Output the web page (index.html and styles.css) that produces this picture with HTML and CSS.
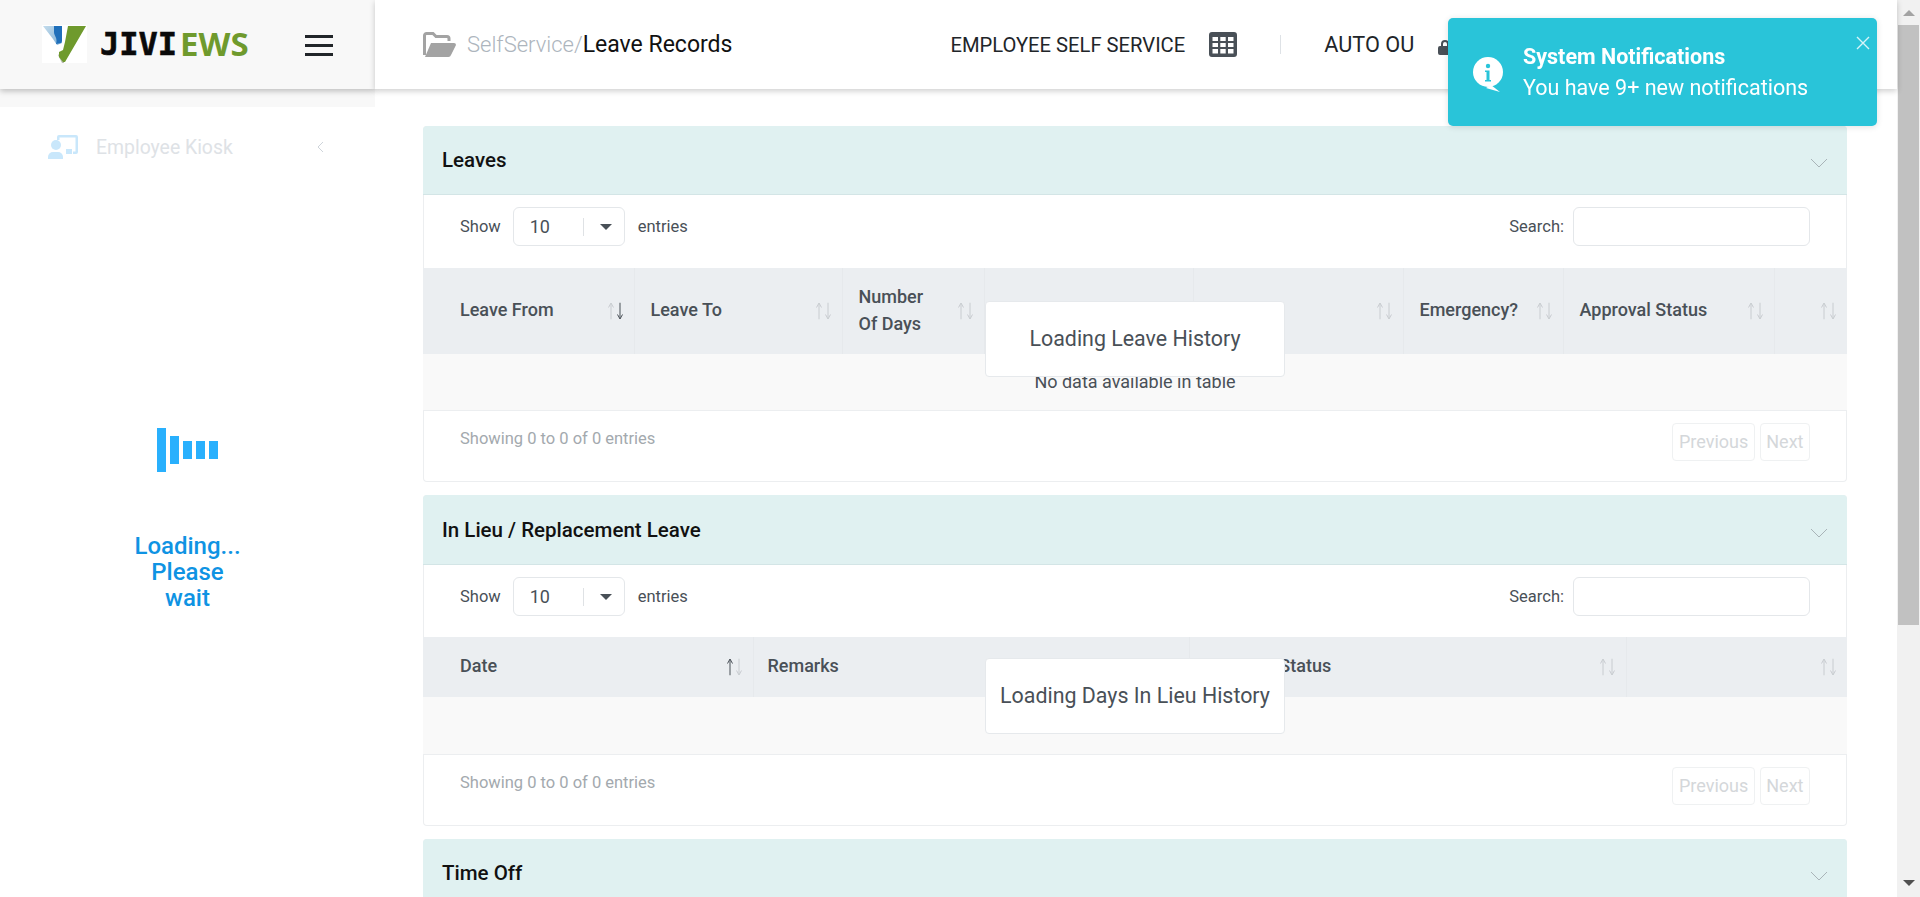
FILE: index.html
```html
<!doctype html>
<html lang="en">
<head>
    <meta charset="UTF-8">
    <title>Leave Records</title>
    <link rel="stylesheet" href="styles.css">
</head>
<body>
<svg class="sprites">
    <symbol id="arrows" viewBox="0 0 17 17">
        <path class="sort__up" d="M4 17V1M1.500 5 4 .5 6.500 5"/>
        <path class="sort__down" d="M13 0v16M10.500 12 13 16.500 15.500 12"/>
    </symbol>
</svg>
<div class="app">
    <aside class="sidebar">
        <div class="sidebar__head">
            <a class="logo" href="#">
                <svg class="logo__mark" viewBox="0 0 45 38">
                    <defs>
                        <linearGradient id="wedge" x1="0" y1="0" x2="1" y2="1">
                            <stop offset="0" stop-color="#c4dcec"/>
                            <stop offset="1" stop-color="#7fb0d6"/>
                        </linearGradient>
                    </defs>
                    <rect width="45" height="38" fill="#fff"/>
                    <polygon points="1,1 20,1 20,18 15,20 11,14" fill="url(#wedge)"/>
                    <path d="M12 1h8v15l-1 2-5 1c2-6-2-8-2-12z" fill="#1f6fba"/>
                    <polygon points="16,30 21,26 22,38 20,38" fill="#b8bcb0"/>
                    <polygon points="44,1 26,1 23,17 21,25 17,27 17,32 21,37 23,37" fill="#6f9a2d"/>
                </svg>
                <span class="logo__text">JIVI</span><span class="logo__accent">EWS</span>
            </a>
            <button class="burger" type="button"><span></span><span></span><span></span></button>
        </div>
        <div class="sidebar__strip"></div>
        <nav class="sidebar__nav">
            <svg class="sidebar__icon" viewBox="0 0 30 24">
                <path d="M11 0h17a2 2 0 0 1 2 2v15a2 2 0 0 1-2 2H25v-2.500h2.500v-14H11.500V5H9V2a2 2 0 0 1 2-2z" fill="#c9e7fb"/>
                <circle cx="8" cy="10" r="5" fill="#c9e7fb"/>
                <path d="M0 24v-2a5 5 0 0 1 5-5h5a5 5 0 0 1 5 5v2z" fill="#c9e7fb"/>
                <rect x="18" y="14" width="6" height="5" fill="#c9e7fb"/>
            </svg>
            <span class="sidebar__label">Employee Kiosk</span>
            <svg class="sidebar__caret" viewBox="0 0 8 12"><path d="M7 1 2 6l5 5" fill="none" stroke="#ced4da"/></svg>
        </nav>
        <div class="loader">
            <div class="loader__bars">
                <span class="loader__bar loader__bar--tall"></span>
                <span class="loader__bar loader__bar--mid"></span>
                <span class="loader__bar"></span>
                <span class="loader__bar"></span>
                <span class="loader__bar"></span>
            </div>
            <p class="loader__text">Loading...<br>Please<br>wait</p>
        </div>
    </aside>

    <div class="main">
        <header class="topbar">
            <svg class="topbar__folder" viewBox="0 0 33 25">
                <path d="M1.500 23V3.500a2 2 0 0 1 2-2h6.500l3 3h11a2 2 0 0 1 2 2V9" fill="none" stroke="#a3a3a3" stroke-width="3"/>
                <path d="M8 11h23a2 2 0 0 1 2 2l-5 10a3 3 0 0 1-3 2H2z" fill="#a3a3a3"/>
            </svg>
            <div class="crumbs"><span class="crumbs__muted">SelfService/</span>Leave Records</div>
            <div class="topbar__right">
                <span class="topbar__item">EMPLOYEE SELF SERVICE</span>
                <svg class="topbar__grid" viewBox="0 0 28 25">
                    <path fill-rule="evenodd" fill="#495057" d="M3 0h22a3 3 0 0 1 3 3v19a3 3 0 0 1-3 3H3a3 3 0 0 1-3-3V3a3 3 0 0 1 3-3zM3.500 5v4h5.500V5zm7.800 0v4h5.400V5zm7.700 0v4h5.500V5zM3.500 11v4h5.500v-4zm7.800 0v4h5.400v-4zm7.700 0v4h5.500v-4zM3.500 17v4.500h5.500V17zm7.800 0v4.500h5.400V17zm7.700 0v4.500h5.500V17z"/>
                </svg>
                <span class="topbar__sep"></span>
                <span class="topbar__item topbar__item--ou">AUTO OU</span>
                <svg class="topbar__lock" viewBox="0 0 14 16">
                    <path d="M3 7V5a4 4 0 0 1 8 0v2h1a2 2 0 0 1 2 2v5a2 2 0 0 1-2 2H2a2 2 0 0 1-2-2V9a2 2 0 0 1 2-2zm2 0h4V5a2 2 0 0 0-4 0z" fill="#495057"/>
                </svg>
            </div>
        </header>

        <main class="content">
            <section class="card">
                <div class="card__head">
                    <h2 class="card__title">Leaves</h2>
                    <svg class="card__chevron" viewBox="0 0 18 10"><path d="M1 1l8 8 8-8" fill="none" stroke="#a9b4b8"/></svg>
                </div>
                <div class="card__body">
                    <div class="controls controls--tall">
                        <div class="controls__length">
                            <span>Show</span>
                            <div class="picker"><span class="picker__value">10</span><span class="picker__arrow"></span></div>
                            <span>entries</span>
                        </div>
                        <div class="controls__search">
                            <label for="search-leaves">Search:</label>
                            <input class="controls__input" id="search-leaves" type="text">
                        </div>
                    </div>
                    <table class="grid grid--leaves">
                        <colgroup>
                            <col class="c-211"><col class="c-208"><col class="c-142"><col class="c-209"><col class="c-210"><col class="c-160"><col class="c-211"><col class="c-73">
                        </colgroup>
                        <thead>
                        <tr>
                            <th class="grid__first">Leave From<svg class="sort sort--desc"><use href="#arrows"/></svg></th>
                            <th>Leave To<svg class="sort"><use href="#arrows"/></svg></th>
                            <th>Number<br>Of Days<svg class="sort"><use href="#arrows"/></svg></th>
                            <th><svg class="sort"><use href="#arrows"/></svg></th>
                            <th><svg class="sort"><use href="#arrows"/></svg></th>
                            <th>Emergency?<svg class="sort"><use href="#arrows"/></svg></th>
                            <th>Approval Status<svg class="sort"><use href="#arrows"/></svg></th>
                            <th><svg class="sort"><use href="#arrows"/></svg></th>
                        </tr>
                        </thead>
                        <tbody>
                        <tr><td class="grid__empty" colspan="8">No data available in table</td></tr>
                        </tbody>
                    </table>
                    <div class="pager">
                        <span class="pager__info">Showing 0 to 0 of 0 entries</span>
                        <div class="pager__btns"><a class="pager__btn" href="#">Previous</a><a class="pager__btn" href="#">Next</a></div>
                    </div>
                    <div class="processing">Loading Leave History</div>
                </div>
            </section>

            <section class="card">
                <div class="card__head card__head--tall">
                    <h2 class="card__title">In Lieu / Replacement Leave</h2>
                    <svg class="card__chevron" viewBox="0 0 18 10"><path d="M1 1l8 8 8-8" fill="none" stroke="#a9b4b8"/></svg>
                </div>
                <div class="card__body card__body--short">
                    <div class="controls">
                        <div class="controls__length">
                            <span>Show</span>
                            <div class="picker"><span class="picker__value">10</span><span class="picker__arrow"></span></div>
                            <span>entries</span>
                        </div>
                        <div class="controls__search">
                            <label for="search-lieu">Search:</label>
                            <input class="controls__input" id="search-lieu" type="text">
                        </div>
                    </div>
                    <table class="grid grid--lieu">
                        <colgroup>
                            <col class="c-330"><col class="c-436"><col class="c-437"><col class="c-221">
                        </colgroup>
                        <thead>
                        <tr>
                            <th class="grid__first">Date<svg class="sort sort--asc"><use href="#arrows"/></svg></th>
                            <th>Remarks</th>
                            <th>Approval Status<svg class="sort"><use href="#arrows"/></svg></th>
                            <th><svg class="sort"><use href="#arrows"/></svg></th>
                        </tr>
                        </thead>
                        <tbody>
                        <tr><td class="grid__empty" colspan="4"></td></tr>
                        </tbody>
                    </table>
                    <div class="pager">
                        <span class="pager__info">Showing 0 to 0 of 0 entries</span>
                        <div class="pager__btns"><a class="pager__btn" href="#">Previous</a><a class="pager__btn" href="#">Next</a></div>
                    </div>
                    <div class="processing">Loading Days In Lieu History</div>
                </div>
            </section>

            <section class="card">
                <div class="card__head">
                    <h2 class="card__title">Time Off</h2>
                    <svg class="card__chevron" viewBox="0 0 18 10"><path d="M1 1l8 8 8-8" fill="none" stroke="#a9b4b8"/></svg>
                </div>
            </section>
        </main>
    </div>

    <div class="scrollbar">
        <span class="scrollbar__up"></span>
        <span class="scrollbar__thumb"></span>
        <span class="scrollbar__down"></span>
    </div>
</div>

<div class="toast">
    <svg class="toast__icon" viewBox="0 0 30 36">
        <circle cx="15" cy="15" r="15" fill="#fff"/>
        <path d="M18 28l9 7-14-4z" fill="#fff"/>
        <circle cx="15" cy="9" r="2.200" fill="#29c4d9"/>
        <path d="M12 13.500h4.500V23H18v1.500h-6V23h1.500v-8H12z" fill="#29c4d9"/>
    </svg>
    <div class="toast__body">
        <div class="toast__title">System Notifications</div>
        <div class="toast__msg">You have 9+ new notifications</div>
    </div>
    <svg class="toast__close" viewBox="0 0 14 14"><path d="M1 1l12 12M13 1 1 13" stroke="#d8f4f8" stroke-width="1.400"/></svg>
</div>
</body>
</html>
```

FILE: styles.css
```css
* {
    box-sizing: border-box;
}

html,
body {
    height: 100%;
}

body {
    margin: 0;
    overflow: hidden;
    background: #fff;
    color: #495057;
    font-family: Roboto, "Liberation Sans", sans-serif;
    font-size: 16.500px;
}

.sprites {
    display: none;
}

.app {
    display: flex;
    height: 897px;
    overflow: hidden;
}

/* sidebar */

.sidebar {
    width: 375px;
    flex: none;
    background: #fff;
}

.sidebar__head {
    height: 89px;
    padding: 25px 42px 0;
    display: flex;
    align-items: flex-start;
    justify-content: space-between;
    background: #f8f8f8;
    box-shadow: 0 2px 6px rgba(0, 0, 0, 0.25);
    position: relative;
}

.sidebar__strip {
    height: 18px;
    background: #f8f8f8;
}

.logo {
    display: flex;
    align-items: center;
    height: 38px;
    text-decoration: none;
    line-height: 38px;
}

.logo__mark {
    width: 45px;
    height: 38px;
    margin-right: 13px;
}

.logo__text {
    font-family: "DejaVu Sans Mono", monospace;
    font-weight: 700;
    font-size: 32px;
    color: #0a0a0a;
    -webkit-text-stroke: 0.6px #0a0a0a;
}

.logo__accent {
    margin-left: 3px;
    font-family: "Open Sans", sans-serif;
    font-weight: 700;
    font-size: 33px;
    color: #6f9a2d;
}

.burger {
    width: 28px;
    margin: 10px 0 0;
    padding: 0;
    border: 0;
    background: none;
    display: flex;
    flex-direction: column;
    gap: 6px;
}

.burger span {
    height: 3px;
    background: #212529;
}

.sidebar__nav {
    display: flex;
    align-items: center;
    height: 54px;
    margin-top: 13px;
    padding: 0 51px 0 48px;
}

.sidebar__icon {
    width: 30px;
    height: 24px;
}

.sidebar__label {
    margin-left: 18px;
    flex: 1;
    font-size: 19.400px;
    color: #dee2e6;
}

.sidebar__caret {
    width: 8px;
    height: 12px;
}

.loader {
    margin-top: 254px;
    text-align: center;
}

.loader__bars {
    display: flex;
    justify-content: center;
    align-items: center;
    gap: 4px;
    height: 44px;
}

.loader__bar {
    width: 9px;
    height: 18px;
    background: #29b0fd;
}

.loader__bar--tall {
    height: 44px;
}

.loader__bar--mid {
    height: 28px;
}

.loader__text {
    margin: 61px 0 0;
    font-size: 24px;
    line-height: 26px;
    font-weight: 500;
    color: #0f93e3;
}

/* top bar */

.main {
    flex: 1;
    min-width: 0;
}

.topbar {
    height: 89px;
    padding-left: 48px;
    display: flex;
    align-items: center;
    background: #fff;
    box-shadow: 0 2px 6px rgba(0, 0, 0, 0.2);
    position: relative;
}

.topbar__folder {
    width: 33px;
    height: 25px;
    margin-right: 11px;
}

.crumbs {
    font-size: 23px;
    color: #111;
}

.crumbs__muted {
    color: #adb5bd;
    font-size: 22px;
    font-weight: 300;
}

.topbar__right {
    margin-left: 218px;
    display: flex;
    align-items: center;
}

.topbar__item {
    font-size: 20.200px;
    color: #212529;
}

.topbar__item--ou {
    font-size: 21.700px;
}

.topbar__grid {
    width: 28px;
    height: 25px;
    margin-left: 24px;
}

.topbar__sep {
    width: 1px;
    height: 19px;
    margin: 0 43px;
    background: #dee2e6;
}

.topbar__lock {
    width: 14px;
    height: 16px;
    margin: 4px 0 0 24px;
}

/* cards */

.content {
    padding: 37px 50px 0 48px;
}

.card {
    margin-bottom: 13px;
    border-radius: 4px;
    background: #fff;
    box-shadow: inset 0 0 0 1px #eceef0;
}

.card__head {
    height: 69px;
    padding: 0 19px;
    display: flex;
    align-items: center;
    justify-content: space-between;
    background: #e0f1f1;
    border-bottom: 1px solid #d3e5e6;
    border-radius: 4px 4px 0 0;
}

.card__head--tall {
    height: 70px;
}

.card__title {
    margin: 0;
    font-size: 20.500px;
    font-weight: 500;
    color: #111;
}

.card__chevron {
    width: 18px;
    height: 10px;
    margin: 6px 0 0;
}

.card__body {
    position: relative;
    height: 287px;
}

.card__body--short {
    height: 261px;
}

.controls {
    height: 72px;
    padding: 12px 37px 0;
    display: flex;
    justify-content: space-between;
    align-items: flex-start;
}

.controls--tall {
    height: 73px;
}

.controls__length,
.controls__search {
    display: flex;
    align-items: center;
    height: 39px;
}

.picker {
    width: 112px;
    height: 39px;
    margin: 0 13px 0 12px;
    padding: 0 12px 0 16px;
    display: flex;
    align-items: center;
    justify-content: space-between;
    border: 1px solid #e4e7ea;
    border-radius: 6px;
    font-size: 18px;
}

.picker__arrow {
    width: 29px;
    height: 18px;
    border-left: 1px solid #dfe2e5;
    position: relative;
}

.picker__arrow::after {
    content: "";
    position: absolute;
    right: 0;
    top: 6px;
    border: 6px solid transparent;
    border-top: 6px solid #495057;
    border-bottom: 0;
}

.controls__search label {
    margin-right: 9px;
}

.controls__input {
    width: 237px;
    height: 39px;
    border: 1px solid #e4e7ea;
    border-radius: 6px;
}

/* tables */

.grid {
    width: 1424px;
    table-layout: fixed;
    border-collapse: collapse;
}

.c-211 { width: 211px; }
.c-208 { width: 208px; }
.c-142 { width: 142px; }
.c-209 { width: 209px; }
.c-210 { width: 210px; }
.c-160 { width: 160px; }
.c-73 { width: 73px; }
.c-330 { width: 330px; }
.c-436 { width: 436px; }
.c-437 { width: 437px; }
.c-221 { width: 221px; }

.grid th {
    position: relative;
    padding: 0 36px 3px 16px;
    background: #ebeef1;
    border-left: 1px solid #e6e9ec;
    text-align: left;
    font-size: 18px;
    line-height: 27px;
    font-weight: 500;
    color: #495057;
}

.grid--leaves th {
    height: 86px;
}

.grid--lieu th {
    height: 60px;
    padding-left: 14px;
}

.grid th.grid__first {
    padding-left: 37px;
    border-left: 0;
}

.sort {
    --up: #c8ccd0;
    --down: #c8ccd0;
    position: absolute;
    right: 10px;
    top: 50%;
    width: 17px;
    height: 17px;
    transform: translateY(-50%);
    fill: none;
    stroke-width: 1;
}

.sort__up {
    stroke: var(--up);
}

.sort__down {
    stroke: var(--down);
}

.sort--desc {
    --down: #495057;
}

.sort--asc {
    --up: #495057;
}

.grid__empty {
    height: 57px;
    padding: 0;
    background: #f9f9f9;
    border-bottom: 1px solid #eceef0;
    text-align: center;
    font-size: 18px;
}

.grid--leaves .grid__empty {
    height: 56px;
}

.pager {
    height: 72px;
    padding: 12px 37px 0;
    display: flex;
    justify-content: space-between;
}

.pager__info {
    padding-top: 6px;
    color: #a3a9ae;
}

.pager__btns {
    display: flex;
    gap: 5px;
}

.pager__btn {
    height: 38px;
    padding: 0 5.500px;
    display: flex;
    align-items: center;
    border: 1px solid #eff1f2;
    border-radius: 4px;
    text-decoration: none;
    font-size: 18px;
    color: #d4d7da;
}

.processing {
    position: absolute;
    left: 50%;
    top: 50%;
    width: 300px;
    height: 76px;
    transform: translate(-50%, -50%);
    display: flex;
    align-items: center;
    justify-content: center;
    background: #fff;
    border: 1px solid #e6e9ec;
    border-radius: 4px;
    font-size: 21.400px;
    color: #495057;
}

/* fake scrollbar, the window itself does not scroll */

.scrollbar {
    width: 23px;
    flex: none;
    display: flex;
    flex-direction: column;
    align-items: center;
    background: #f1f1f1;
}

.scrollbar__up,
.scrollbar__down {
    width: 0;
    height: 0;
    border: 6px solid transparent;
}

.scrollbar__up {
    margin-top: 10px;
    border-top: 0;
    border-bottom: 6px solid #a3a3a3;
}

.scrollbar__thumb {
    width: 21px;
    height: 600px;
    margin-top: 9px;
    background: #c1c1c1;
}

.scrollbar__down {
    margin-top: auto;
    margin-bottom: 11px;
    border-bottom: 0;
    border-top: 6px solid #505050;
}

/* toast */

.toast {
    position: fixed;
    left: 1448px;
    top: 18px;
    width: 429px;
    height: 108px;
    padding: 0 0 0 25px;
    display: flex;
    align-items: center;
    background: #29c4d9;
    border-radius: 5px;
    box-shadow: 0 1px 6px rgba(0, 0, 0, 0.12);
    color: #fff;
}

.toast__icon {
    width: 30px;
    height: 36px;
    margin: 6px 20px 0 0;
}

.toast__body {
    padding-top: 2px;
}

.toast__title {
    font-size: 21.500px;
    font-weight: 700;
    line-height: 27px;
}

.toast__msg {
    padding-top: 2px;
    font-size: 21.500px;
    line-height: 32px;
}

.toast__close {
    position: absolute;
    right: 7px;
    top: 18px;
    width: 14px;
    height: 14px;
}
```
